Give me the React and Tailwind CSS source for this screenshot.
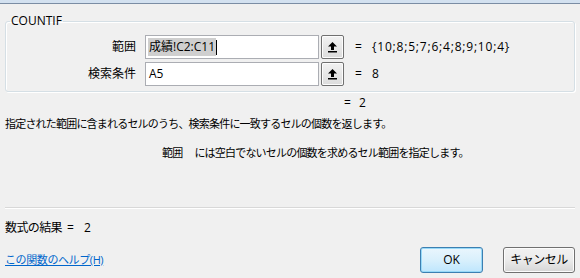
import React from "react";

const UploadIcon = () => (
    <svg width="11" height="12" viewBox="0 0 11 12">
        <path d="M5.5 1 L10 5.5 L7 5.5 L7 9 L4 9 L4 5.5 L1 5.5 Z" fill="#000" />
        <rect x="1" y="10" width="9" height="1.5" fill="#000" />
    </svg>
);

const RefButton = () => (
    <div className="flex h-[24px] w-[23px] items-center justify-center rounded-[2px] border border-[#707070] bg-gradient-to-b from-[#f2f2f2] to-[#dcdcdc] shadow-[inset_0_0_0_1px_#fcfcfc]">
        <UploadIcon />
    </div>
);

const ArgRow = ({ label, value, selected, result }) => (
    <div className="flex h-[24px] items-center">
        <div className="w-[131px] pr-[1px] text-right text-[12px] text-black">{label}</div>
        <div className="ml-[8px] flex h-[24px] w-[174px] items-center border border-[#abadb3] bg-white pl-[2px] text-[12px] text-black">
            {selected ? (
                <>
                    <span className="bg-[#cfcfcf] px-[1px]">{value}</span>
                    <span className="h-[15px] w-px bg-black" />
                </>
            ) : (
                <span className="px-[1px]">{value}</span>
            )}
        </div>
        <div className="ml-[2px]">
            <RefButton />
        </div>
        <div className="ml-[11px] w-[14px] text-[12px]">=</div>
        <div className="ml-[3px] text-[12px] tracking-[0.8px] text-black">{result}</div>
    </div>
);

export default function App() {
    return (
        <div
            className="relative h-[278px] w-[580px] overflow-hidden bg-[#f0f0f0] text-black"
            style={{ fontFamily: '"Open Sans", "Noto Sans CJK JP", sans-serif' }}
        >
            <div className="h-[3px] bg-[#d3e1f0]" />
            <div className="h-px bg-[#7b8da4]" />

            <fieldset className="mx-[5px] mt-[10px] w-[570px] rounded-[3px] border border-[#d5dfe5] px-0 pt-[7px] pb-[5px] shadow-[inset_1px_1px_0_#fff,1px_1px_0_#fff]">
                <legend className="ml-[4px] px-[1px] text-[12px] leading-[14px]">COUNTIF</legend>
                <div className="flex flex-col gap-[3px]">
                    <ArgRow label="範囲" value="成績!C2:C11" selected result="{10;8;5;7;6;4;8;9;10;4}" />
                    <ArgRow label="検索条件" value="A5" result="8" />
                </div>
            </fieldset>

            <div className="mt-[3px] flex text-[12px] leading-[16px]">
                <span className="ml-[344px] w-[14px]">=</span>
                <span className="ml-[1px]">2</span>
            </div>

            <div className="mt-[5px] pl-[5px] text-[11px] leading-[16px] tracking-[-0.8px]">
                指定された範囲に含まれるセルのうち、検索条件に一致するセルの個数を返します。
            </div>

            <div className="mt-[13px] pl-[162px] text-[11px] leading-[16px] tracking-[-0.8px]">
                <span>範囲</span>
                <span className="ml-[12px]">には空白でないセルの個数を求めるセル範囲を指定します。</span>
            </div>

            <div className="mx-[5px] mt-[46px] h-px bg-[#d8d8d8] shadow-[0_1px_0_#fff]" />

            <div className="mt-[12px] pl-[5px] text-[12px] leading-[16px]">
                <span className="tracking-[-0.6px]">数式の結果</span>
                <span className="ml-[5px]">=</span>
                <span className="ml-[10px]">2</span>
            </div>

            <div className="mt-[11px] flex items-center pl-[5px] pr-[5px]">
                <a className="text-[11px] leading-[16px] tracking-[-0.4px] text-[#0066cc] underline" href="#">
                    この関数のヘルプ(H)
                </a>
                <div className="ml-auto flex gap-[20px]">
                    <button className="h-[26px] w-[63px] rounded-[3px] border border-[#3c7fb1] bg-gradient-to-b from-[#eaf6fd] via-[#d9f0fc] to-[#bee6fd] text-[12px] shadow-[inset_0_0_0_1px_#97d9f8]">
                        OK
                    </button>
                    <button className="h-[26px] w-[72px] rounded-[3px] border border-[#707070] bg-gradient-to-b from-[#f2f2f2] via-[#ebebeb] to-[#d6d6d6] text-[12px] tracking-[-0.5px] shadow-[inset_0_0_0_1px_#fcfcfc]">
                        キャンセル
                    </button>
                </div>
            </div>
        </div>
    );
}
